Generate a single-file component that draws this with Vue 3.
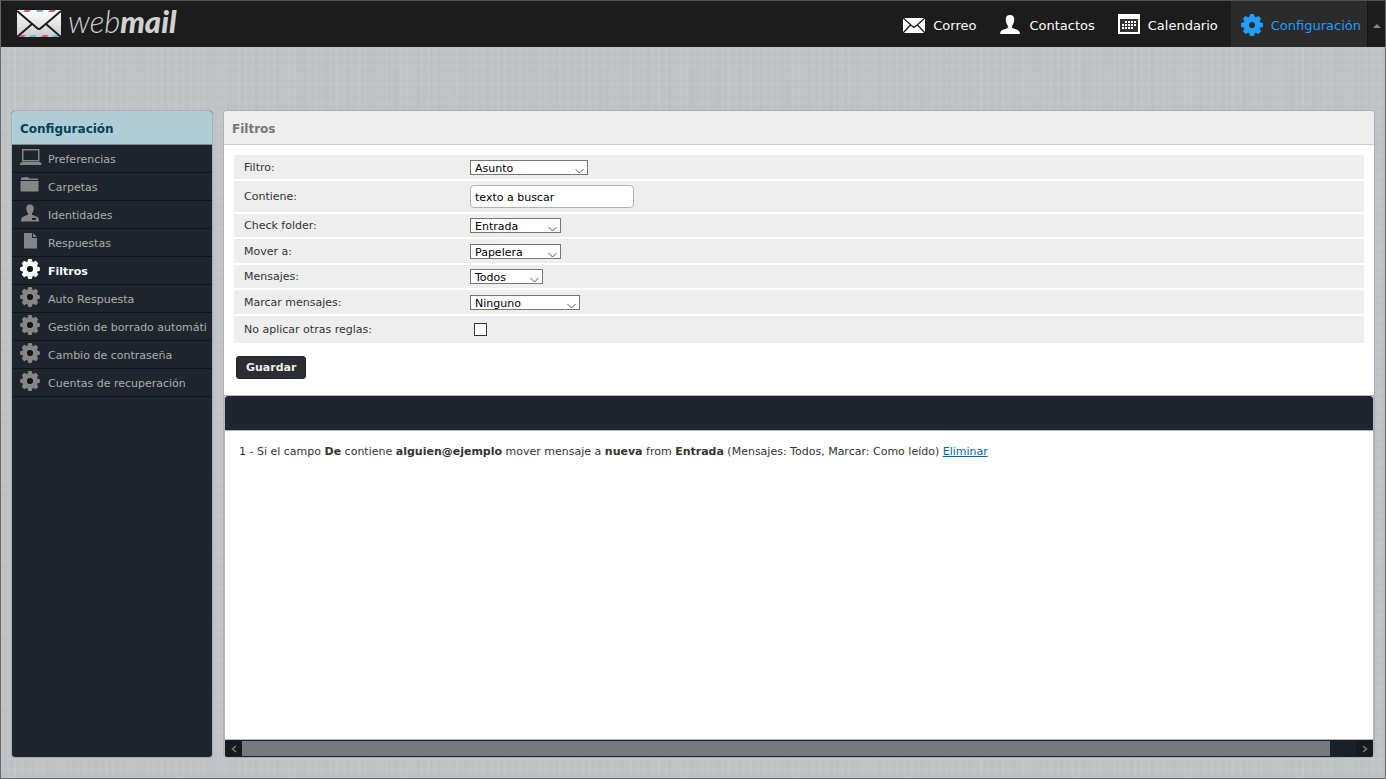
<script setup>
import { ref } from 'vue'

const nav = [
  { label: 'Correo', icon: 'mail' },
  { label: 'Contactos', icon: 'user' },
  { label: 'Calendario', icon: 'calendar' },
  { label: 'Configuración', icon: 'gear', active: true },
]

const sections = [
  { label: 'Preferencias', icon: 'laptop' },
  { label: 'Carpetas', icon: 'folder' },
  { label: 'Identidades', icon: 'identity' },
  { label: 'Respuestas', icon: 'page' },
  { label: 'Filtros', icon: 'gear', active: true },
  { label: 'Auto Respuesta', icon: 'gear' },
  { label: 'Gestión de borrado automáti', icon: 'gear' },
  { label: 'Cambio de contraseña', icon: 'gear' },
  { label: 'Cuentas de recuperación', icon: 'gear' },
]

const fields = [
  { id: 'filtro', label: 'Filtro:', type: 'select', value: 'Asunto', size: 'wide' },
  { id: 'contiene', label: 'Contiene:', type: 'text', row: 'tall' },
  { id: 'carpeta', label: 'Check folder:', type: 'select', value: 'Entrada', size: 'medium', row: 'compact' },
  { id: 'mover', label: 'Mover a:', type: 'select', value: 'Papelera', size: 'medium' },
  { id: 'mensajes', label: 'Mensajes:', type: 'select', value: 'Todos', size: 'narrow', row: 'compact' },
  { id: 'marcar', label: 'Marcar mensajes:', type: 'select', value: 'Ninguno', size: 'large' },
  { id: 'reglas', label: 'No aplicar otras reglas:', type: 'check', row: 'roomy' },
]

const search = ref('texto a buscar')
const stop = ref(false)
const gearTeeth = [0, 45, 90, 135, 180, 225, 270, 315]
</script>

<template>
  <div class="app">
    <header class="topbar">
      <a class="logo" href="#">
        <svg width="44" height="28" viewBox="0 0 44 28" aria-hidden="true">
          <defs>
            <linearGradient id="paper" x1="0" y1="0" x2="0" y2="1">
              <stop offset="0" stop-color="#fff" />
              <stop offset="1" stop-color="#c9cbce" />
            </linearGradient>
          </defs>
          <rect width="44" height="27" fill="url(#paper)" />
          <path d="M8 0h6l-2 2H6zM33 0h6l-2 2h-6zM4 25h5l-2 2H2zM26 25h6l-2 2h-6z" fill="#e0508f" />
          <path d="M20 0h7l-2 2h-6zM14 25h6l-2 2h-6zM36 25h5l1 2h-7z" fill="#6cb9dc" />
          <path d="M0 1L20 18q2 2 4 0L44 1M0 27l15-13M44 27L29 14" fill="none" stroke="#1c1c1c" stroke-width="2" />
        </svg>
        <span class="brand">web<b>mail</b></span>
      </a>
      <nav class="nav">
        <a v-for="n in nav" :key="n.label" href="#" class="nav-item" :class="{ active: n.active }">
          <svg v-if="n.icon === 'mail'" width="22" height="24" viewBox="0 0 22 24" aria-hidden="true">
            <rect y="5" width="22" height="15" fill="#fff" />
            <path d="M0 5l9 8q2 2 4 0l9-8M0 20l7.500-8M22 20l-7.500-8" fill="none" stroke="#1c1c1c" stroke-width="1.300" />
          </svg>
          <svg v-else-if="n.icon === 'user'" width="22" height="24" viewBox="0 0 22 24" aria-hidden="true">
            <path d="M11 2c3 0 4.500 1.800 4.200 5-.2 3-1.200 4.500-2 5.500v2.500l5.500 2Q21 17.800 21 21H1q0-3.200 2.300-4l5.500-2v-2.500C8 11.500 7 10 6.800 7 6.500 3.800 8 2 11 2z" fill="#fff" />
          </svg>
          <svg v-else-if="n.icon === 'calendar'" width="22" height="24" viewBox="0 0 22 24" aria-hidden="true">
            <rect y="1" width="22" height="20" fill="#fff" />
            <rect x="2" y="6" width="18" height="13" fill="#333" />
            <path d="M7 8h2v2H7zm3 0h2v2h-2zm3 0h2v2h-2zm3 0h2v2h-2zM4 11h2v2H4zm3 0h2v2H7zm3 0h2v2h-2zm3 0h2v2h-2zm3 0h2v2h-2zM4 14h2v2H4zm3 0h2v2H7zm3 0h2v2h-2zm3 0h2v2h-2z" fill="#fff" />
          </svg>
          <svg v-else width="22" height="24" viewBox="-11 -12 22 24" aria-hidden="true">
            <circle r="5.500" fill="none" stroke="currentColor" stroke-width="5" />
            <path v-for="a in gearTeeth" :key="a" d="M-3.300-7l1.500-4h3.600l1.500 4z" :transform="`rotate(${a})`" fill="currentColor" />
          </svg>
          <span>{{ n.label }}</span>
        </a>
      </nav>
      <button class="toggle" aria-label="Ocultar barra">
        <svg width="8" height="4" viewBox="0 0 8 4"><path d="M4 0l4 4H0z" fill="#888" /></svg>
      </button>
    </header>

    <div class="body">
      <aside class="panel sidebar">
        <h2 class="sidebar-title">Configuración</h2>
        <ul class="sections">
          <li v-for="s in sections" :key="s.label">
            <a href="#" class="section" :class="{ active: s.active }">
              <svg v-if="s.icon === 'laptop'" width="22" height="20" viewBox="0 0 22 20" aria-hidden="true">
                <path d="M2.750 2.750h16v11h-16z" fill="none" stroke="currentColor" stroke-width="1.500" />
                <path d="M2 15h18l1.500 1.500V18H0v-1.500z" fill="currentColor" />
              </svg>
              <svg v-else-if="s.icon === 'folder'" width="22" height="20" viewBox="0 0 22 20" aria-hidden="true">
                <path d="M1 4V3q0-.5.5-.5L8 2l1 1.500h9V5H1zM0.500 6h18v9.500q0 1-1 1h-16q-1 0-1-1z" fill="currentColor" />
              </svg>
              <svg v-else-if="s.icon === 'identity'" width="22" height="20" viewBox="0 0 22 20" aria-hidden="true">
                <path d="M10 1.500c2.700 0 4 1.600 3.800 4.300-.2 2.300-1 3.600-1.800 4.500v1.500l5 2q2 .8 2 4.700H1q0-4 2-4.700l5-2v-1.500C7.200 9.400 6.400 8.100 6.200 5.800 6 3.100 7.300 1.500 10 1.500z" fill="currentColor" />
                <path d="M12 15h4v2h-4z" fill="#1e252c" />
              </svg>
              <svg v-else-if="s.icon === 'page'" width="22" height="20" viewBox="0 0 22 20" aria-hidden="true">
                <path d="M4 2h8v5h5v10.500H4zM13 2l4 4h-4z" fill="currentColor" />
              </svg>
              <svg v-else width="22" height="20" viewBox="-10 -10 22 20" aria-hidden="true">
                <circle r="5" fill="none" stroke="currentColor" stroke-width="4.500" />
                <circle r="3" fill="#10151a" />
                <path v-for="a in gearTeeth" :key="a" d="M-3-6.300l1.400-3.600h3.200l1.400 3.600z" :transform="`rotate(${a})`" fill="currentColor" />
              </svg>
              <span>{{ s.label }}</span>
            </a>
          </li>
        </ul>
      </aside>

      <main class="panel content">
        <h1 class="content-title">Filtros</h1>
        <form class="form" @submit.prevent>
          <table class="fields">
            <tbody>
              <tr v-for="f in fields" :key="f.id" :class="f.row">
                <th scope="row"><label :for="f.id">{{ f.label }}</label></th>
                <td>
                  <span v-if="f.type === 'select'" class="select" :class="f.size">
                    <select :id="f.id"><option>{{ f.value }}</option></select>
                    <svg width="9" height="6" viewBox="0 0 9 6" aria-hidden="true">
                      <path d="M.5 1l4 4 4-4" fill="none" stroke="#555" />
                    </svg>
                  </span>
                  <input v-else-if="f.type === 'text'" :id="f.id" v-model="search" class="text" type="text" />
                  <input v-else :id="f.id" v-model="stop" class="check" type="checkbox" />
                </td>
              </tr>
            </tbody>
          </table>
          <button class="save" type="submit">Guardar</button>
        </form>

        <section class="list">
          <div class="list-bar"></div>
          <div class="list-body">
            <p>
              1 - Si el campo <b>De</b> contiene <b>alguien@ejemplo</b> mover mensaje a <b>nueva</b> from
              <b>Entrada</b> (Mensajes: Todos, Marcar: Como leído) <a href="#">Eliminar</a>
            </p>
          </div>
          <div class="scroll">
            <button class="scroll-end" aria-label="Desplazar a la izquierda">
              <svg width="6" height="8" viewBox="0 0 6 8"><path d="M5 1L1.500 4 5 7" fill="none" stroke="#777" stroke-width="1.600" /></svg>
            </button>
            <div class="scroll-track"><div class="scroll-thumb"></div></div>
            <button class="scroll-end" aria-label="Desplazar a la derecha">
              <svg width="6" height="8" viewBox="0 0 6 8"><path d="M1 1l3.500 3L1 7" fill="none" stroke="#777" stroke-width="1.600" /></svg>
            </button>
          </div>
        </section>
      </main>
    </div>
  </div>
</template>

<style>
body {
  margin: 0;
}
</style>

<style scoped>
.app {
  box-sizing: border-box;
  min-height: 100vh;
  display: flex;
  flex-direction: column;
  border: 1px solid #66686b;
  border-top-color: #505352;
  font: 11px/14px Verdana, "DejaVu Sans", sans-serif;
  color: #333;
  background:
    repeating-linear-gradient(90deg, rgba(255, 255, 255, 0.06) 0 1px, transparent 1px 3px, rgba(80, 90, 100, 0.02) 3px 4px, transparent 4px 7px),
    repeating-linear-gradient(0deg, rgba(255, 255, 255, 0.06) 0 1px, transparent 1px 4px, rgba(80, 90, 100, 0.02) 4px 5px, transparent 5px 9px),
    repeating-linear-gradient(90deg, rgba(90, 100, 110, 0.02) 0 5px, transparent 5px 13px, rgba(255, 255, 255, 0.04) 13px 15px, transparent 15px 23px),
    #bfc3c6;
}

.app *,
.app *::before {
  box-sizing: border-box;
}

.topbar {
  display: flex;
  align-items: stretch;
  height: 46px;
  background: #1c1c1c;
}

.logo {
  display: flex;
  align-items: center;
  gap: 7px;
  padding: 0 16px 1px;
  color: #d2d2d2;
  text-decoration: none;
}

.brand {
  margin-bottom: 6px;
  font: italic 300 31px/36px Lato, sans-serif;
}

.brand b {
  font-weight: 900;
}

.nav {
  display: flex;
  gap: 7px;
  margin-left: auto;
}

.nav-item {
  display: flex;
  align-items: center;
  gap: 8px;
  padding: 2px 6px 0 10px;
  color: #fff;
  font-size: 13px;
  text-decoration: none;
}

.nav-item span,
.section span {
  padding-top: 2px;
}

.nav-item.active {
  color: #1f9fff;
  background: #2b2b2b;
}

.toggle {
  display: flex;
  align-items: center;
  justify-content: center;
  width: 18px;
  padding: 4px 0 0;
  border: 0;
  border-left: 1px solid #141414;
  background: #1c1c1c;
}

.body {
  flex: 1;
  display: flex;
  gap: 10px;
  padding: 63px 10px 20px;
}

.panel {
  border: 1px solid #a9afb9;
  border-radius: 4px;
  overflow: hidden;
}

.sidebar {
  flex: none;
  width: 202px;
  background: #1e252c;
}

.sidebar-title,
.content-title {
  margin: 0;
  height: 34px;
  padding: 1px 8px 0;
  font-size: 12px;
  line-height: 34px;
}

.sidebar-title {
  color: #004458;
  background: #b0ccd7;
  border-bottom: 1px solid #7a8b94;
}

.content-title {
  color: #777;
  background: #eee;
  border-bottom: 1px solid #ccc;
}

.sections {
  margin: 0;
  padding: 0;
  list-style: none;
}

.section {
  display: flex;
  align-items: center;
  gap: 6px;
  height: 28px;
  padding-left: 8px;
  border-bottom: 1px solid #10151a;
  color: #adadad;
  text-decoration: none;
  white-space: nowrap;
}

.section svg {
  flex: none;
  margin-bottom: 4px;
  color: #868686;
}

.section.active,
.section.active svg {
  color: #fff;
  font-weight: bold;
}

.content {
  flex: 1;
  min-width: 0;
  display: flex;
  flex-direction: column;
  background: #fff;
}

.form {
  padding: 8px 8px 16px;
}

.fields {
  width: 100%;
  border-collapse: separate;
  border-spacing: 0 2px;
  padding: 0 2px;
}

.fields tr {
  height: 24px;
  background: #eee;
}

.fields tr.compact {
  height: 23px;
}

.fields tr.roomy {
  height: 27px;
}

.fields tr.tall {
  height: 31px;
}

.fields th,
.fields td {
  padding: 0;
  vertical-align: middle;
}

.fields th {
  width: 236px;
  padding: 1px 0 0 10px;
  font-weight: normal;
  text-align: left;
}

.select {
  position: relative;
  display: block;
  height: 15px;
}

.select.wide {
  width: 118px;
}

.select.large {
  width: 110px;
}

.select.medium {
  width: 91px;
}

.select.narrow {
  width: 73px;
}

.select select {
  display: block;
  width: 100%;
  height: 15px;
  padding: 1px 0 0 4px;
  appearance: none;
  border: 1px solid #767676;
  border-radius: 0;
  background: #fff;
  color: #000;
  font: inherit;
  line-height: 13px;
}

.select svg {
  position: absolute;
  right: 4px;
  bottom: 1px;
  pointer-events: none;
}

.text {
  display: block;
  width: 164px;
  height: 23px;
  padding: 1px 4px 0;
  border: 1px solid #b2b2b2;
  border-radius: 4px;
  background: #fff;
  color: #000;
  font: inherit;
}

.check {
  display: block;
  appearance: none;
  width: 13px;
  height: 13px;
  margin: 0 4px;
  border: 1px solid #333;
  background: #fff;
}

.check:checked {
  background: #333;
}

.save {
  display: block;
  height: 23px;
  margin: 11px 0 0 4px;
  padding: 1px 9px 0;
  border: 1px solid #23262b;
  border-radius: 3px;
  background: #2b2d33;
  color: #eee;
  font: inherit;
  font-weight: bold;
}

.list {
  flex: 1;
  display: flex;
  flex-direction: column;
  border: 1px solid #b0b8c0;
  border-bottom: 0;
}

.list-bar {
  height: 34px;
  background: #1e252c;
  border-radius: 3px 3px 0 0;
}

.list-body {
  flex: 1;
  padding: 14px;
  border: 1px solid #b0b8c0;
  border-width: 1px 0;
}

.list-body p {
  margin: 0;
}

.list-body a {
  color: #0069a6;
}

.scroll {
  display: flex;
  height: 17px;
  padding: 1px 0;
  background: #1a1f28;
}

.scroll-end {
  display: flex;
  align-items: center;
  justify-content: center;
  width: 17px;
  padding: 0;
  border: 0;
  background: #17191e;
}

.scroll-track {
  flex: 1;
}

.scroll-thumb {
  width: 97.7%;
  height: 100%;
  background: #76797d;
}
</style>
